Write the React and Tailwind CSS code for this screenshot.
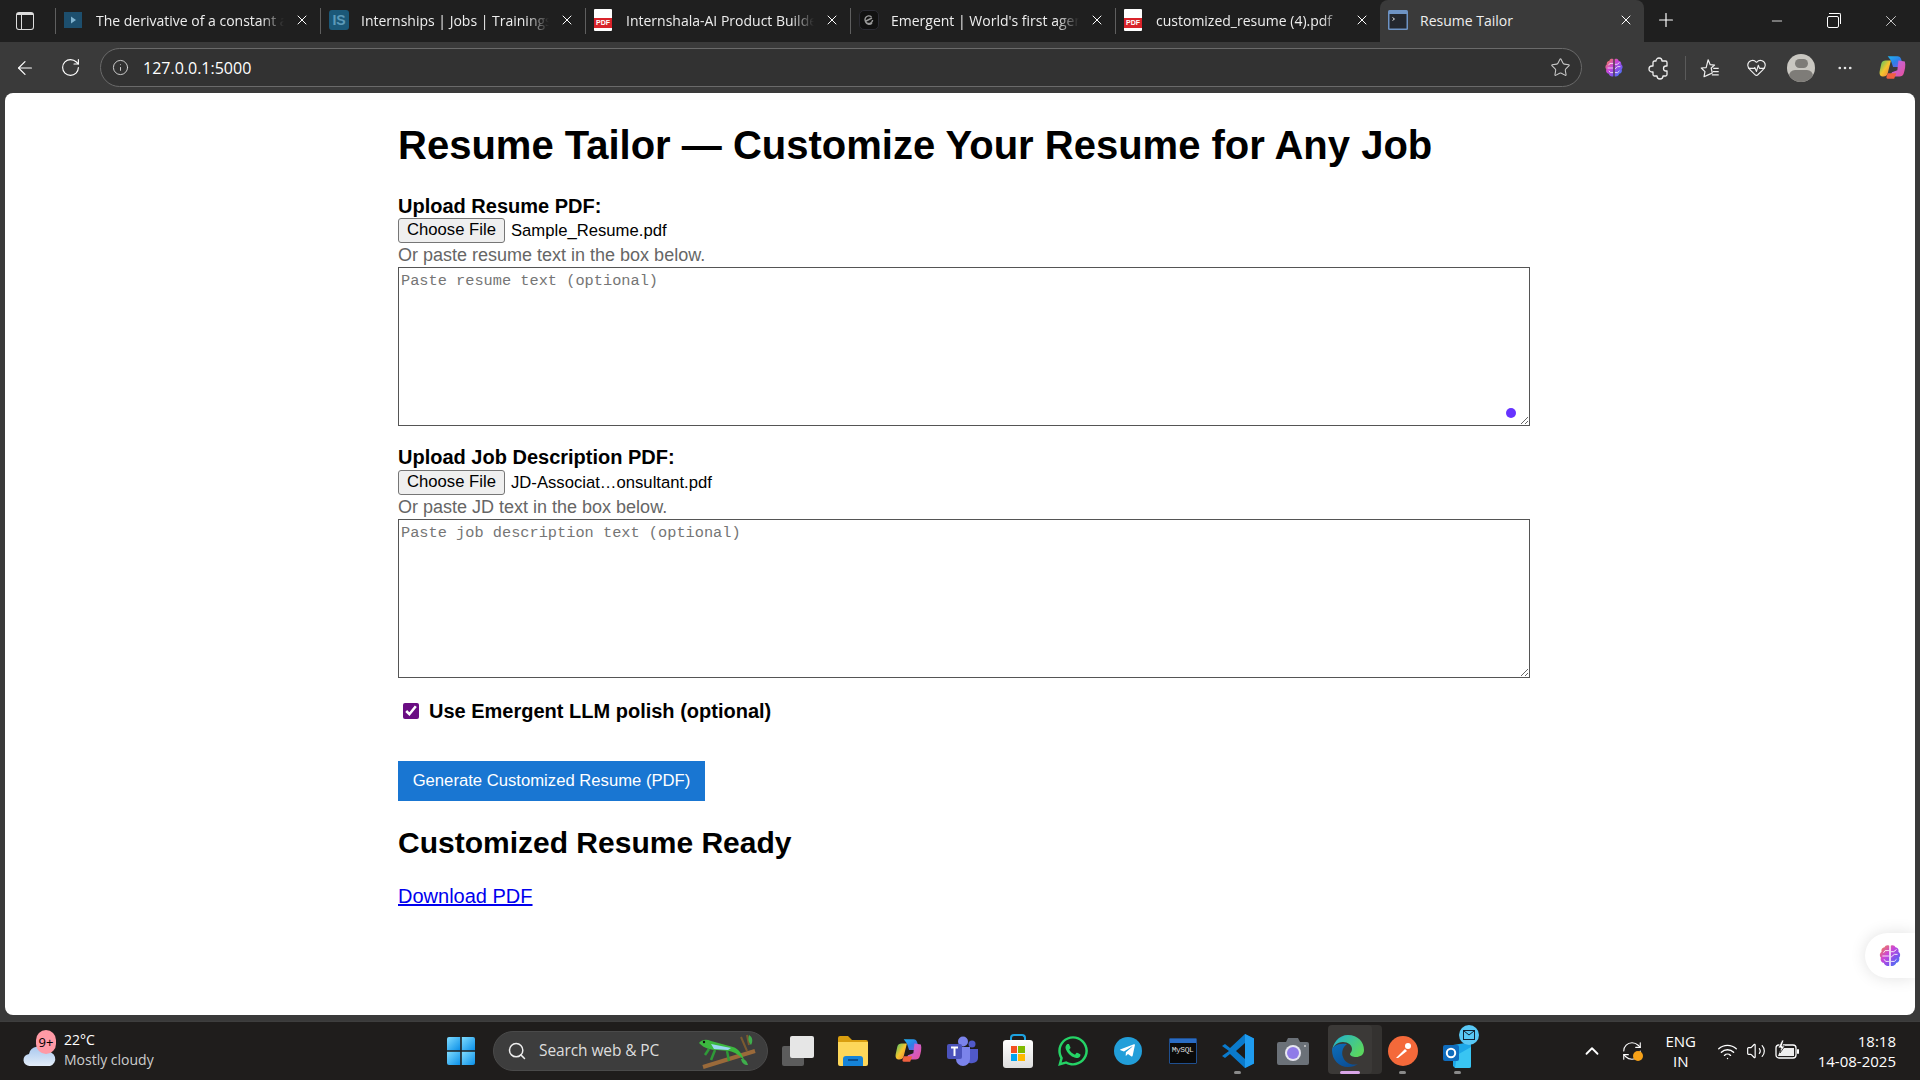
import {
  ArrowLeft,
  ChevronUp,
  Info,
  Minus,
  MoreHorizontal,
  Plus,
  RotateCw,
  Search,
  Star,
  Volume2,
  Wifi,
  X,
  HeartPulse,
  RefreshCw,
} from "lucide-react";
import { FaWhatsapp, FaTelegramPlane } from "react-icons/fa";

//FAVICONS
function VideoIcon() {
  return (
    <svg width="18" height="16" viewBox="0 0 18 16">
      <rect width="18" height="16" fill="#1d4f6e" />
      <path d="M7 4.500l5 3.500-5 3.500z" fill="#7fb2cf" />
    </svg>
  );
}

function IsIcon() {
  return (
    <div className="w-5 h-5 rounded-[3px] bg-[#1b5878] flex items-center justify-center text-[14px] font-bold leading-none text-[#5d9ab8] font-['Liberation_Sans',sans-serif]">
      IS
    </div>
  );
}

function PdfIcon() {
  return (
    <div className="relative w-[18px] h-[22px] bg-white rounded-[1px]">
      <div className="absolute left-0 right-0 top-[9px] h-[10px] bg-[#d8232a] text-white text-[7px] font-bold leading-[10px] text-center font-['Liberation_Sans',sans-serif]">
        PDF
      </div>
    </div>
  );
}

function EmergentIcon() {
  return (
    <div className="w-5 h-5 rounded-[5px] bg-[#111] border border-[#2c2c34] flex items-center justify-center">
      <svg width="12" height="12" viewBox="0 0 12 12" fill="none" stroke="#999" strokeWidth="1.4">
        <path d="M3 7l6-3M9.600 6A3.800 3.800 0 1 1 8.500 3M2.600 8A3.800 3.800 0 0 0 9 9" />
      </svg>
    </div>
  );
}

function TerminalIcon() {
  return (
    <svg width="20" height="20" viewBox="0 0 20 20">
      <rect width="20" height="20" rx="1.500" fill="#6d93c4" />
      <rect x="1.500" y="4" width="17" height="14.500" fill="#23272e" />
      <path d="M4.500 7.500l2 1.500-2 1.500" fill="none" stroke="#ddd" strokeWidth="1" />
    </svg>
  );
}

//BRAND DRAWINGS
function BrainIcon({ size = 20, id }) {
  return (
    <svg width={size} height={size} viewBox="0 0 24 24">
      <defs>
        <linearGradient id={id} x1="0" y1="0" x2="1" y2="1">
          <stop offset="0" stopColor="#f58a3c" />
          <stop offset="0.4" stopColor="#cc45d8" />
          <stop offset="0.7" stopColor="#7a55ee" />
          <stop offset="1" stopColor="#2f8cf5" />
        </linearGradient>
      </defs>
      <path
        fill={`url(#${id})`}
        d="M11.300 2.500C9.500 1.500 7.500 2.200 7 4 4.800 4.200 3.600 6.200 4.200 8 2.400 9.200 2 12 3.600 13.500 2.800 15.600 4 18 6.200 18.300 6.700 20.600 9.500 22 11.300 21ZM12.700 2.500C14.500 1.500 16.500 2.200 17 4 19.200 4.200 20.400 6.200 19.800 8 21.600 9.200 22 12 20.400 13.500 21.200 15.600 20 18 17.800 18.300 17.300 20.600 14.500 22 12.700 21Z"
      />
      <path
        fill="none"
        stroke="#fff"
        strokeWidth="0.8"
        d="M11 7H7.500L6 9M11 12H5M11 17H8L6.500 15M13 8h2.500L18 6M13 13l3-2.500h3M13 17h3l2-2"
      />
    </svg>
  );
}

function CopilotIcon({ size = 28, id }) {
  return (
    <svg width={size} height={size} viewBox="0 0 28 28">
      <defs>
        <linearGradient id={`${id}a`} x1="0" y1="0" x2="1" y2="1">
          <stop offset="0" stopColor="#1fb5f0" />
          <stop offset="0.5" stopColor="#2e7fe8" />
          <stop offset="1" stopColor="#7d5be8" />
        </linearGradient>
        <linearGradient id={`${id}b`} x1="0" y1="0" x2="1" y2="1">
          <stop offset="0" stopColor="#3fc46a" />
          <stop offset="0.5" stopColor="#f6c52e" />
          <stop offset="1" stopColor="#f0783a" />
        </linearGradient>
        <linearGradient id={`${id}c`} x1="0" y1="0" x2="1" y2="1">
          <stop offset="0" stopColor="#b46cf0" />
          <stop offset="1" stopColor="#e84f9a" />
        </linearGradient>
      </defs>
      <path d="M10 3h9c2 0 3 1 3.600 3L25 13H15L13 7Z" fill={`url(#${id}a)`} />
      <path d="M8 7h5l-3 12c-.5 2-2 3-4 3-3 0-4-2-3.500-5L4 10c.5-2 2-3 4-3Z" fill={`url(#${id}b)`} />
      <path d="M20 7l6 1c1 3 0 8-1 11-.6 2-2 3-4 3h-9l2-4 5-2Z" fill={`url(#${id}c)`} />
      <path d="M10 19h8l-2 5h-6c-1 0-1.500-1-1-2Z" fill="#f0603f" />
    </svg>
  );
}

function WindowsLogo() {
  return (
    <svg width="30" height="30" viewBox="0 0 30 30">
      <defs>
        <linearGradient id="win" x1="0" y1="0" x2="1" y2="1">
          <stop offset="0" stopColor="#7fdcff" />
          <stop offset="1" stopColor="#0a8fe8" />
        </linearGradient>
      </defs>
      <path d="M1 3a2 2 0 0 1 2-2h11.200v13.200H1Z" fill="url(#win)" />
      <path d="M15.800 1H27a2 2 0 0 1 2 2v11.200H15.800Z" fill="url(#win)" />
      <path d="M1 15.800h13.200V29H3a2 2 0 0 1-2-2Z" fill="url(#win)" />
      <path d="M15.800 15.800H29V27a2 2 0 0 1-2 2H15.800Z" fill="url(#win)" />
    </svg>
  );
}

function WeatherIcon() {
  return (
    <div className="relative w-[36px] h-[40px]">
      <svg className="absolute left-0 top-[8px]" width="36" height="32" viewBox="0 0 36 32">
        <defs>
          <linearGradient id="cloud" x1="0" y1="0" x2="0" y2="1">
            <stop offset="0" stopColor="#a9c8ee" />
            <stop offset="1" stopColor="#e3edf9" />
          </linearGradient>
        </defs>
        <circle cx="25" cy="10" r="6" fill="#f08a28" />
        <path d="M8 28a6 6 0 0 1-1-12 9 9 0 0 1 17-2 7 7 0 0 1 4 14Z" fill="url(#cloud)" />
      </svg>
      <div className="absolute left-[14px] top-0 w-[20px] h-[24px] rounded-full bg-[#ff9aa6] text-black text-[13px] leading-[24px] text-center font-['Open_Sans',sans-serif]">
        9+
      </div>
    </div>
  );
}

function Lizard() {
  return (
    <svg width="62" height="36" viewBox="0 0 62 36">
      <path d="M6 34L58 18" stroke="#9a6a3a" strokeWidth="4" />
      <path d="M44 4l6 14M50 2l2 10" stroke="#7a5a30" strokeWidth="2" />
      <path d="M52 2c4 2 4 7 2 10-3-3-3-7-2-10ZM44 26c4 0 6 2 7 6-4 0-6-2-7-6Z" fill="#3fae4c" />
      <path d="M2 10c3-4 8-4 12-2l22 6c6 2 8 6 12 14-6-6-10-9-16-10l-12-1c-6 0-12-1-18-7Z" fill="#3cb83f" />
      <path d="M14 11l20 4-3 2-14-1Z" fill="#9bd7f0" />
      <path d="M18 17l-4 10M30 18l2 10M12 16l-4 6" stroke="#2f9a38" strokeWidth="2.500" />
      <circle cx="7" cy="9" r="1.200" fill="#111" />
    </svg>
  );
}

function TaskView() {
  return (
    <div className="relative w-[32px] h-[30px]">
      <div className="absolute left-0 top-[10px] w-[22px] h-[20px] rounded-[2px] bg-[#5c5c5c]" />
      <div className="absolute left-[8px] top-0 w-[24px] h-[22px] rounded-[2px] bg-[#e6e6e6]" />
    </div>
  );
}

function Explorer() {
  return (
    <svg width="30" height="30" viewBox="0 0 30 30">
      <path d="M0 2a2 2 0 0 1 2-2h8l4 4h14a2 2 0 0 1 2 2v4H0Z" fill="#d99e0f" />
      <path d="M0 6h30v22a2 2 0 0 1-2 2H2a2 2 0 0 1-2-2Z" fill="#fdd75a" />
      <path d="M5 30v-7a3 3 0 0 1 3-3h14a3 3 0 0 1 3 3v7Z" fill="#1583d8" />
      <rect x="10" y="23" width="10" height="2" fill="#0a4f8f" />
    </svg>
  );
}

function Teams() {
  return (
    <svg width="32" height="32" viewBox="0 0 32 32">
      <circle cx="25" cy="9" r="3.500" fill="#5059c9" />
      <path d="M19 14h12v9a5 5 0 0 1-5 5 6 6 0 0 1-7-3Z" fill="#5059c9" />
      <circle cx="16" cy="6.500" r="5" fill="#7b83eb" />
      <path d="M9 12h14v12a7 7 0 0 1-14 0Z" fill="#7b83eb" />
      <rect x="0" y="9" width="15" height="15" rx="2" fill="#4b53bc" />
      <path d="M4 12.500h7M7.500 12.500V21" stroke="#fff" strokeWidth="2" />
    </svg>
  );
}

function StoreIcon() {
  return (
    <div className="relative w-[30px] h-[34px]">
      <div className="absolute left-[7px] top-0 w-[16px] h-[10px] rounded-t-[4px] border-2 border-b-0 border-[#1da2e0]" />
      <div className="absolute left-0 top-[6px] w-[30px] h-[28px] rounded-[3px] bg-gradient-to-b from-white to-[#dedede] grid grid-cols-2 gap-[1px] p-[8px] pb-[7px] pt-[6px]">
        <div className="bg-[#f25022]" />
        <div className="bg-[#7fba00]" />
        <div className="bg-[#00a4ef]" />
        <div className="bg-[#ffb900]" />
      </div>
    </div>
  );
}

function MySql() {
  return (
    <div className="w-[28px] h-[26px] bg-[#0a0a0a] border border-[#1f4f8f] rounded-[1px] relative">
      <div className="h-[4px] bg-[#2a6cc4]" />
      <div className="text-[8px] leading-[14px] text-[#ddd] text-center font-['Liberation_Mono',monospace] tracking-[-0.5px]">
        MySQL
      </div>
    </div>
  );
}

function VsCode() {
  return (
    <svg width="32" height="34" viewBox="0 0 32 34">
      <path d="M23 0l9 4.500v25L23 34 8 20l-5 4-3-2 7-5-7-5 3-2 5 4Z" fill="#0a7acc" />
      <path d="M23 0l9 4.500v25L23 34Z" fill="#1f9cf0" />
      <path d="M23 9l-9 8 9 8Z" fill="#1e1c1a" />
    </svg>
  );
}

function Camera() {
  return (
    <svg width="32" height="28" viewBox="0 0 32 28">
      <path d="M2 5h7l2-4h10l2 4h7a2 2 0 0 1 2 2v19a2 2 0 0 1-2 2H2a2 2 0 0 1-2-2V7a2 2 0 0 1 2-2Z" fill="#6b7178" />
      <circle cx="16" cy="16" r="8" fill="#e6e6f0" />
      <circle cx="16" cy="16" r="6" fill="#8f7be8" />
      <circle cx="28" cy="9" r="1" fill="#ccc" />
    </svg>
  );
}

function Edge({ size = 32 }) {
  return (
    <svg width={size} height={size} viewBox="0 0 32 32">
      <defs>
        <linearGradient id="edgeA" x1="0" y1="0" x2="1" y2="0.6">
          <stop offset="0" stopColor="#1db0d8" />
          <stop offset="1" stopColor="#5ad65f" />
        </linearGradient>
        <linearGradient id="edgeB" x1="0" y1="0" x2="0.6" y2="1">
          <stop offset="0" stopColor="#0d6fbb" />
          <stop offset="1" stopColor="#0b4f96" />
        </linearGradient>
      </defs>
      <path d="M16 0c10 0 16 7 16 15 0 5-4 7-8 7-3 0-6-1-6-3 0-1 2-2 2-5 0-4-4-7-9-7-6 0-11 4-11 11C0 8 7 0 16 0Z" fill="url(#edgeA)" />
      <path d="M0 15C0 25 7 32 16 32c4 0 7-1 10-3-6 2-13-1-15-7-2-5 0-10 4-13-1-.2-2-.3-4-.3C5 8.700 0 12 0 15Z" fill="url(#edgeB)" />
    </svg>
  );
}

function Postman() {
  return (
    <div className="w-[30px] h-[30px] rounded-full bg-[#f4693a] flex items-center justify-center">
      <svg width="18" height="18" viewBox="0 0 18 18">
        <path d="M2 16l9-9 2 2-9 7Z" fill="#fff" />
        <circle cx="14" cy="4" r="3" fill="#fff" />
      </svg>
    </div>
  );
}

function Outlook() {
  return (
    <div className="relative w-[36px] h-[36px]">
      <svg className="absolute left-0 top-0" width="36" height="36" viewBox="0 0 36 36">
        <path d="M10 12l18-3v24a2 2 0 0 1-2 2H12l-2-2Z" fill="#1ca7e8" />
        <path d="M14 22l14-8v19a2 2 0 0 1-2 2H12Z" fill="#39c5f2" />
        <rect x="0" y="12" width="16" height="16" rx="2" fill="#0f6cbd" />
        <circle cx="8" cy="20" r="4.200" fill="none" stroke="#fff" strokeWidth="2" />
      </svg>
      <div className="absolute left-[16px] top-[-8px] w-[20px] h-[20px] rounded-full bg-[#59c8f5] flex items-center justify-center">
        <svg width="12" height="10" viewBox="0 0 12 10" fill="none" stroke="#123" strokeWidth="1">
          <rect x="0.500" y="0.500" width="11" height="9" />
          <path d="M1 1l5 4 5-4" />
        </svg>
      </div>
    </div>
  );
}

//TOOLBAR + TRAY GLYPHS
function PuzzleIcon() {
  return (
    <svg width="22" height="24" viewBox="0 0 22 24" fill="none" stroke="#eeeeee" strokeWidth="1.300" strokeLinejoin="round">
      <path d="M8 5a3 3 0 0 1 6 0h3.500a1.500 1.500 0 0 1 1.500 1.500V10h-1a2.500 2.500 0 0 0 0 5h1v3.500a1.500 1.500 0 0 1-1.500 1.500H15a3 3 0 0 1-6 0H6.500A1.500 1.500 0 0 1 5 18.500V16H4a3 3 0 0 1 0-6h1V6.500A1.500 1.500 0 0 1 6.500 5Z" />
    </svg>
  );
}

function FavoritesIcon() {
  return (
    <svg width="24" height="24" viewBox="0 0 24 24" fill="none" stroke="#eeeeee" strokeWidth="1.300" strokeLinejoin="round">
      <path d="M10 3l2.200 5.400 4.800.4-3.700 3.200 1.200 5.500L10 19.500l-4.500 2 1-5.500L2.500 12l5.300-.4Z" />
      <path d="M15.500 12.500h6M15 16h6.500M14 19.500h7.500" />
    </svg>
  );
}

function BatteryIcon() {
  return (
    <svg width="24" height="22" viewBox="0 0 24 22">
      <rect x="1" y="5" width="20" height="13" rx="3" fill="none" stroke="#fff" strokeWidth="1.300" />
      <rect x="22" y="9" width="2" height="5" rx="1" fill="#fff" />
      <path d="M3 16l3-8h13v8Z" fill="#eee" />
      <path d="M7 0L3 8h3l-1 5 5-7H7l2-6Z" fill="#fff" stroke="#1f1d1c" strokeWidth="0.800" />
    </svg>
  );
}

//BROWSER CHROME
const TABS = [
  { title: "The derivative of a constant a", icon: <VideoIcon /> },
  { title: "Internships | Jobs | Trainings", icon: <IsIcon /> },
  { title: "Internshala-AI Product Builde", icon: <PdfIcon /> },
  { title: "Emergent | World's first agen", icon: <EmergentIcon /> },
  { title: "customized_resume (4).pdf", icon: <PdfIcon /> },
];

const chromeFont = "font-['Open_Sans',sans-serif]";

function Tab({ title, icon }) {
  return (
    <div className="w-[265px] h-[42px] flex items-center shrink-0 pt-[5px] pb-[7px] border-l border-solid [border-image:linear-gradient(to_bottom,transparent_20%,#5f5f5f_20%,#5f5f5f_80%,transparent_80%)_1]">
      <div className="w-[40px] pl-[8px] flex justify-start">{icon}</div>
      <span className="w-[188px] text-[14px] text-[#eeeeee] whitespace-nowrap overflow-hidden [mask-image:linear-gradient(to_right,black_88%,transparent)]">
        {title}
      </span>
      <X size={16} strokeWidth={1.5} className="text-white ml-[10px]" />
    </div>
  );
}

function TabStrip() {
  return (
    <div className={`h-[42px] bg-[#1f1f1f] flex items-center ${chromeFont}`}>
      <div className="w-[55px] flex pl-[16px]">
        <div className="w-[18px] h-[18px] rounded-[3px] border-[1.5px] border-[#dddddd] border-t-[3px] flex">
          <div className="w-[5px] border-r border-[#dddddd]" />
        </div>
      </div>
      {TABS.map((tab, index) => (
        <Tab key={index} {...tab} />
      ))}
      <div className="w-[264px] h-[42px] bg-[#3a3a3a] rounded-t-lg flex items-center pl-[8px] pb-[2px] shrink-0">
        <TerminalIcon />
        <span className="ml-[12px] text-[14px] text-[#eeeeee] w-[198px] whitespace-nowrap">Resume Tailor</span>
        <X size={16} strokeWidth={1.5} className="text-white" />
      </div>
      <Plus size={22} strokeWidth={1.3} className="text-white ml-[11px] mb-[2px]" />
      <div className="ml-auto flex items-center text-white">
        <div className="w-[57px] flex justify-center">
          <Minus size={16} strokeWidth={1.2} />
        </div>
        <div className="w-[57px] flex justify-center pr-[2px]">
          <div className="relative w-[12px] h-[12px] border border-white rounded-[2px] mt-[2px]">
            <div className="absolute left-[1px] top-[-4px] w-[12px] h-[11px] border-t border-r border-white rounded-tr-[2px]" />
          </div>
        </div>
        <div className="w-[58px] flex justify-center">
          <X size={18} strokeWidth={1} />
        </div>
      </div>
    </div>
  );
}

function Toolbar() {
  return (
    <div className={`h-[51px] bg-[#3a3a3a] flex items-center ${chromeFont}`}>
      <div className="w-[50px] flex justify-center">
        <ArrowLeft size={22} strokeWidth={1.3} className="text-white" />
      </div>
      <div className="w-[41px] flex justify-center">
        <RotateCw size={21} strokeWidth={1.3} className="text-white" />
      </div>
      <div className="ml-[9px] w-[1482px] h-[39px] rounded-full bg-[#323232] border border-[#6a6a6a] flex items-center pl-[11px] pr-[10px]">
        <Info size={17} strokeWidth={1.3} className="text-[#d8d8d8]" />
        <span className="ml-[14px] text-[16px] text-white">127.0.0.1:5000</span>
        <Star size={21} strokeWidth={1.2} className="ml-auto text-[#c8c8c8]" />
      </div>
      <div className="ml-[21px] w-[22px] flex justify-center">
        <BrainIcon id="brainTool" size={22} />
      </div>
      <div className="ml-[23px] w-[22px] flex justify-center">
        <PuzzleIcon />
      </div>
      <div className="ml-[15px] w-px h-[24px] bg-[#5a5a5a]" />
      <div className="ml-[13px] w-[22px] flex justify-center">
        <FavoritesIcon />
      </div>
      <div className="ml-[24px] w-[22px] flex justify-center">
        <HeartPulse size={21} strokeWidth={1.3} className="text-[#eeeeee]" />
      </div>
      <div className="ml-[20px] w-[28px] h-[28px] rounded-full bg-[#c9c7c1] overflow-hidden flex flex-col items-center">
        <div className="w-[13px] h-[13px] rounded-full bg-[#7e7c78] mt-[5px]" />
        <div className="w-[24px] h-[16px] rounded-full bg-[#7e7c78] mt-[2px]" />
      </div>
      <div className="ml-[20px] w-[20px] flex justify-center">
        <MoreHorizontal size={18} strokeWidth={1.5} className="text-[#eeeeee]" />
      </div>
      <div className="ml-[22px]">
        <CopilotIcon id="copTool" size={30} />
      </div>
    </div>
  );
}

//PAGE
function FilePicker({ name }) {
  return (
    <div className="flex items-center h-[25px]">
      <button className="w-[107px] h-[25px] bg-[#efefef] border border-[#767676] rounded-[3px] text-[16.670px] leading-none text-black">
        Choose File
      </button>
      <span className="ml-[6px] text-[16.670px] text-black">{name}</span>
    </div>
  );
}

function TextBox({ placeholder, dot }) {
  return (
    <div className="relative w-[1132px] h-[159px]">
      <textarea
        placeholder={placeholder}
        className="block w-full h-full border border-[#555555] px-[2px] pt-[3px] text-[15.300px] leading-[20px] font-['Liberation_Mono',monospace] placeholder:text-[#757575] outline-none"
      />
      {dot && <div className="absolute left-[1108px] top-[141px] w-[10px] h-[10px] rounded-full bg-[#6633ff]" />}
    </div>
  );
}

function Page() {
  return (
    <div className="relative flex-1 bg-white rounded-lg overflow-hidden pl-[393px] font-['Liberation_Sans',sans-serif] text-black">
      <h1 className="mt-[26px] text-[40px] leading-[52px] font-bold whitespace-nowrap">
        Resume Tailor — Customize Your Resume for Any Job
      </h1>
      <label className="block mt-[23px] text-[20px] leading-[24px] font-bold">Upload Resume PDF:</label>
      <FilePicker name="Sample_Resume.pdf" />
      <p className="pt-[1px] text-[18px] leading-[23px] text-[#666666]">Or paste resume text in the box below.</p>
      <TextBox placeholder="Paste resume text (optional)" dot />
      <label className="block mt-[19px] text-[20px] leading-[24px] font-bold">Upload Job Description PDF:</label>
      <div className="pt-[1px]">
        <FilePicker name="JD-Associat…onsultant.pdf" />
      </div>
      <p className="pt-[1px] text-[18px] leading-[23px] text-[#666666]">Or paste JD text in the box below.</p>
      <TextBox placeholder="Paste job description text (optional)" />
      <div className="mt-[25px] flex items-center h-[16px]">
        <input type="checkbox" defaultChecked className="ml-[5px] w-[16px] h-[16px] accent-[#6a0d83]" />
        <span className="ml-[10px] text-[20px] leading-[24px] font-bold whitespace-nowrap">
          Use Emergent LLM polish (optional)
        </span>
      </div>
      <button className="block mt-[42px] w-[307px] h-[40px] bg-[#1976d2] text-white text-[16.670px] leading-none">
        Generate Customized Resume (PDF)
      </button>
      <h2 className="mt-[24px] text-[30px] leading-[36px] font-bold">Customized Resume Ready</h2>
      <a href="#" className="block mt-[23px] w-fit text-[20px] leading-[24px] text-[#0000ee] underline">
        Download PDF
      </a>
      <div className="absolute right-0 top-[840px] w-[50px] h-[45px] bg-white rounded-l-full shadow-[0_0_16px_rgba(0,0,0,0.12)] flex items-center pl-[12px]">
        <BrainIcon id="brainFloat" size={26} />
      </div>
    </div>
  );
}

//TASKBAR
function Slot({ children, dot, active }) {
  return (
    <div className="relative w-[55px] h-[58px] flex items-center justify-center shrink-0 pb-[1px]">
      {active && (
        <>
          <div className="absolute left-[13px] top-[3px] w-[49px] h-[49px] rounded-[4px] bg-[#343230]" />
          <div className="absolute left-[8px] top-[3px] w-[44px] h-[49px] rounded-[4px] bg-[#3b3937]" />
          <div className="absolute left-[20px] top-[49px] w-[20px] h-[3px] rounded-full bg-[#d9a6e8]" />
        </>
      )}
      <div className="relative">{children}</div>
      {dot && <div className="absolute left-[24px] top-[49px] w-[7px] h-[3px] rounded-full bg-[#8a8a8a]" />}
    </div>
  );
}

function Taskbar() {
  return (
    <div className={`relative h-[59px] bg-[#1f1d1c] border-t border-[#3e3e3e] flex items-center text-white ${chromeFont}`}>
      <div className="w-[446px] flex items-center pl-[22px] pb-[2px]">
        <WeatherIcon />
        <div className="ml-[6px] text-[14px] leading-[20px]">
          <div>22°C</div>
          <div className="text-[#cccccc]">Mostly cloudy</div>
        </div>
      </div>
      <WindowsLogo />
      <div className="ml-[17px] w-[275px] h-[40px] rounded-full bg-[#3d3d3d] border border-[#4a4a4a] flex items-center pl-[13px]">
        <Search size={20} strokeWidth={1.8} className="text-[#eeeeee]" />
        <span className="ml-[12px] text-[15.500px] text-[#dddddd] tracking-[-0.1px] w-[158px] whitespace-nowrap">Search web &amp; PC</span>
        <Lizard />
      </div>
      <div className="ml-[2px] flex items-center">
        <Slot><TaskView /></Slot>
        <Slot><Explorer /></Slot>
        <Slot><CopilotIcon id="copTask" size={30} /></Slot>
        <Slot><Teams /></Slot>
        <Slot><StoreIcon /></Slot>
        <Slot><FaWhatsapp size={34} className="text-[#25d366]" /></Slot>
        <Slot>
          <div className="w-[28px] h-[28px] rounded-full bg-[#229ed9] flex items-center justify-center">
            <FaTelegramPlane size={17} className="text-white" />
          </div>
        </Slot>
        <Slot><MySql /></Slot>
        <Slot dot><VsCode /></Slot>
        <Slot><Camera /></Slot>
        <Slot active><Edge /></Slot>
        <Slot dot><Postman /></Slot>
        <Slot dot>
          <div className="ml-[6px]">
            <Outlook />
          </div>
        </Slot>
      </div>
      <div className="ml-auto flex items-center">
        <ChevronUp size={22} strokeWidth={2} />
        <div className="relative ml-[18px]">
          <RefreshCw size={22} strokeWidth={1.2} />
          <div className="absolute left-[12px] top-[11px] w-[10px] h-[10px] rounded-full bg-[#f6a118]" />
        </div>
        <div className="ml-[21px] w-[34px] text-center text-[15px] leading-[20px]">
          <div>ENG</div>
          <div>IN</div>
        </div>
        <Wifi size={21} strokeWidth={1.6} className="ml-[19px]" />
        <Volume2 size={20} strokeWidth={1.4} className="ml-[8px]" />
        <div className="ml-[9px]">
          <BatteryIcon />
        </div>
        <div className="ml-[19px] mr-[24px] text-right text-[15px] leading-[20px]">
          <div>18:18</div>
          <div>14-08-2025</div>
        </div>
      </div>
    </div>
  );
}

export default function App() {
  return (
    <div className="h-screen w-full flex flex-col overflow-hidden bg-[#3a3a3a]">
      <TabStrip />
      <Toolbar />
      <div className="flex-1 flex px-[5px] pb-[6px] min-h-0">
        <Page />
      </div>
      <Taskbar />
    </div>
  );
}
